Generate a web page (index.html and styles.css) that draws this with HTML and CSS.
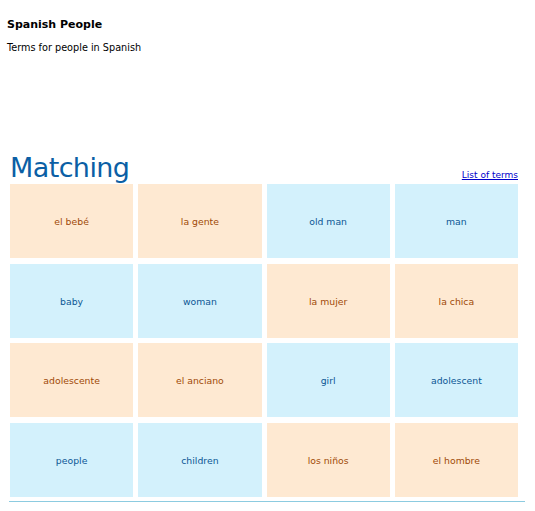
FILE: index.html
```html
<!DOCTYPE html>
<html>
<head>
<meta charset="utf-8">
<link rel="stylesheet" href="styles.css">
</head>
<body>
<div class="page">
  <header class="intro">
    <h1 class="title">Spanish People</h1>
    <p class="subtitle">Terms for people in Spanish</p>
  </header>
  <section class="matching">
    <div class="matching-head">
      <h2 class="heading">Matching</h2>
      <a class="terms-link" href="#">List of terms</a>
    </div>
    <div class="grid">
      <div class="card es">el bebé</div>
      <div class="card es">la gente</div>
      <div class="card en">old man</div>
      <div class="card en">man</div>
      <div class="card en">baby</div>
      <div class="card en">woman</div>
      <div class="card es">la mujer</div>
      <div class="card es">la chica</div>
      <div class="card es">adolescente</div>
      <div class="card es">el anciano</div>
      <div class="card en">girl</div>
      <div class="card en">adolescent</div>
      <div class="card en">people</div>
      <div class="card en">children</div>
      <div class="card es">los niños</div>
      <div class="card es">el hombre</div>
    </div>
    <div class="rule"></div>
  </section>
</div>
</body>
</html>
```
FILE: styles.css
```css
html, body {
  margin: 0;
  padding: 0;
  background: #ffffff;
}
body {
  font-family: "DejaVu Sans", Verdana, sans-serif;
  color: #000;
}
.page {
  padding: 18px 10px 0 7px;
}
.intro {
  display: flex;
  flex-direction: column;
  gap: 11px;
}
.title {
  margin: 0;
  font-size: 11px;
  font-weight: bold;
  line-height: 13px;
}
.subtitle {
  margin: 0;
  font-size: 9.7px;
  line-height: 11px;
}
.matching {
  margin-top: 100px;
  padding-left: 2px;
}
.matching-head {
  display: flex;
  justify-content: space-between;
  align-items: flex-end;
  padding-left: 1px;
  width: 508px;
}
.heading {
  margin: 0;
  font-size: 27px;
  font-weight: normal;
  color: #0b5fa5;
  line-height: 30px;
  letter-spacing: -0.6px;
}
.terms-link {
  font-size: 9px;
  color: #0000cc;
  line-height: 11px;
  margin-bottom: 2px;
}
.grid {
  margin-left: 1px;
  margin-top: 1px;
  width: 508px;
  display: grid;
  grid-template-columns: repeat(4, 1fr);
  column-gap: 5px;
  row-gap: 5.7px;
  grid-auto-rows: 74px;
}
.card {
  display: flex;
  align-items: center;
  justify-content: center;
  padding-top: 1px;
  font-size: 9.3px;
}
.card.es {
  background: #fee9d2;
  color: #a04a08;
}
.card.en {
  background: #d3f1fc;
  color: #0c5794;
}
.rule {
  margin-top: 4px;
  width: 516px;
  height: 1px;
  background: #8ccbe0;
}
```
